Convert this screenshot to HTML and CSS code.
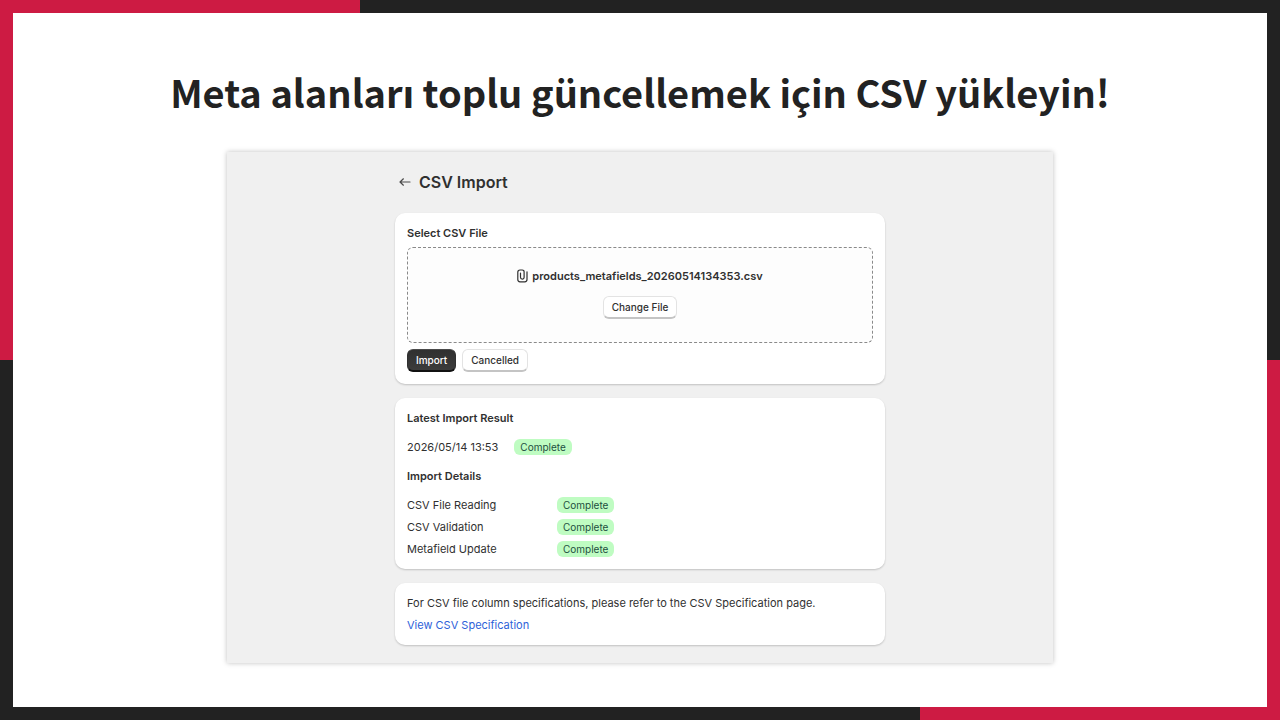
FILE: index.html
```html
<!DOCTYPE html>
<html lang="tr">
<head>
  <meta charset="UTF-8">
  <title>CSV Import</title>
  <link rel="stylesheet" href="styles.css">
</head>
<body>

  <main class="slide">
    <h1 class="headline">Meta alanları toplu güncellemek için CSV yükleyin!</h1>

    <div class="app" lang="en">
      <div class="page">

        <!-- Page title -->
        <header class="page-header">
          <a class="back" href="#" aria-label="Back">
            <svg width="12" height="10" viewBox="0 0 12 10" fill="none" stroke="#4a4a4a" stroke-width="1.2" stroke-linecap="round" stroke-linejoin="round">
              <path d="M11 5H1.2M4.4 1.8L1 5l3.4 3.2"/>
            </svg>
          </a>
          <h2 class="page-title">CSV Import</h2>
        </header>

        <!-- File select -->
        <section class="card">
          <h3 class="card-title">Select CSV File</h3>
          <div class="dropzone">
            <div class="file">
              <svg width="11" height="14" viewBox="0 0 11 14" fill="none" stroke="#303030" stroke-width="1.2" stroke-linecap="round" stroke-linejoin="round">
                <path d="M3.500 4v4.300a1.800 1.800 0 0 0 3.600 0V2.800A1.800 1.800 0 0 0 5.300 1H3A2.200 2.200 0 0 0 .8 3.200v7.400A2.200 2.200 0 0 0 3 12.800h4.800A2.200 2.200 0 0 0 10 10.600V2.800"/>
              </svg>
              <span class="file-name">products_metafields_20260514134353.csv</span>
            </div>
            <button class="btn" type="button">Change File</button>
          </div>
          <div class="actions">
            <button class="btn btn-primary" type="button">Import</button>
            <button class="btn" type="button">Cancelled</button>
          </div>
        </section>

        <!-- Import result -->
        <section class="card">
          <h3 class="card-title">Latest Import Result</h3>
          <div class="latest">
            <span>2026/05/14 13:53</span>
            <span class="badge">Complete</span>
          </div>
          <h3 class="card-title">Import Details</h3>
          <dl class="details">
            <dt>CSV File Reading</dt>
            <dd><span class="badge">Complete</span></dd>
            <dt>CSV Validation</dt>
            <dd><span class="badge">Complete</span></dd>
            <dt>Metafield Update</dt>
            <dd><span class="badge">Complete</span></dd>
          </dl>
        </section>

        <!-- Help -->
        <section class="card">
          <p class="help">For CSV file column specifications, please refer to the CSV Specification page.</p>
          <a class="link" href="#">View CSV Specification</a>
        </section>

      </div>
    </div>
  </main>

</body>
</html>
```

FILE: styles.css
```css
* {
  box-sizing: border-box;
}
body {
  margin: 0;
  min-height: 100vh;
  padding: 13px;
  display: flex;
  background:
    linear-gradient(#cd1b43, #cd1b43) left top / 360px 13px no-repeat,
    linear-gradient(#cd1b43, #cd1b43) left top / 13px 50% no-repeat,
    linear-gradient(#cd1b43, #cd1b43) right bottom / 360px 13px no-repeat,
    linear-gradient(#cd1b43, #cd1b43) right bottom / 13px 50% no-repeat,
    #222;
  color: #303030;
  font-family: Inter, "Liberation Sans", sans-serif;
}
h1, h2, h3, p, dl, dd {
  margin: 0;
}
.slide {
  flex: 1;
  background: #fff;
  padding: 46px 24px 40px;
}
.headline {
  color: #222;
  font-family: "Noto Sans CJK JP", "Noto Sans", sans-serif;
  font-size: 38px;
  font-weight: 700;
  line-height: 66px;
  text-align: center;
}
.app {
  max-width: 826px;
  margin: 27px auto 0;
  padding: 15px 16px 18px;
  background: #f0f0f0;
  box-shadow: 0 0 5px rgba(0, 0, 0, 0.25);
}
.page {
  max-width: 490px;
  margin: 0 auto;
  display: flex;
  flex-direction: column;
  gap: 14px;
}
.page-header {
  display: flex;
  align-items: center;
  gap: 8px;
  margin-bottom: 2px;
  padding: 0 4px;
  height: 30px;
}
.back {
  display: flex;
}
.page-title {
  font-size: 16px;
  font-weight: 600;
  line-height: 24px;
}
.card {
  padding: 12px;
  background: #fff;
  border-radius: 10px;
  box-shadow: 0 1px 2px rgba(0, 0, 0, 0.2);
  font-size: 11px;
  line-height: 16px;
}
.card-title {
  font-size: 11px;
  font-weight: 600;
  line-height: 16px;
}
.dropzone {
  margin: 6px 0;
  padding: 20px 12px 23px;
  border: 1px dashed #8a8a8a;
  border-radius: 6px;
  background: #fdfdfd;
  display: flex;
  flex-direction: column;
  align-items: center;
  gap: 12px;
}
.file {
  display: flex;
  align-items: center;
  gap: 4px;
}
.file-name {
  font-weight: 600;
}
.btn {
  height: 23px;
  padding: 0 8px;
  border: 1px solid #e3e3e3;
  border-bottom: 2px solid #c4c4c4;
  border-radius: 6px;
  background: #fff;
  color: #303030;
  font-family: inherit;
  font-size: 10px;
  font-weight: 500;
}
.btn-primary {
  border-color: #4a4a4a #303030 #111;
  background: linear-gradient(#303030, #3c3c3c);
  color: #fff;
}
.actions {
  display: flex;
  gap: 6px;
}
.latest {
  display: flex;
  align-items: center;
  gap: 16px;
  margin: 13px 0;
}
.badge {
  display: inline-block;
  padding: 0 6px;
  border-radius: 6px;
  background: #bffcc2;
  color: #1d4f40;
  font-size: 10px;
  line-height: 16px;
}
.details {
  display: grid;
  grid-template-columns: 150px 1fr;
  row-gap: 6px;
  margin-top: 13px;
}
.details dd {
  display: flex;
}
.help {
  margin-bottom: 6px;
}
.link {
  color: #2e62d9;
  text-decoration: none;
}
```
